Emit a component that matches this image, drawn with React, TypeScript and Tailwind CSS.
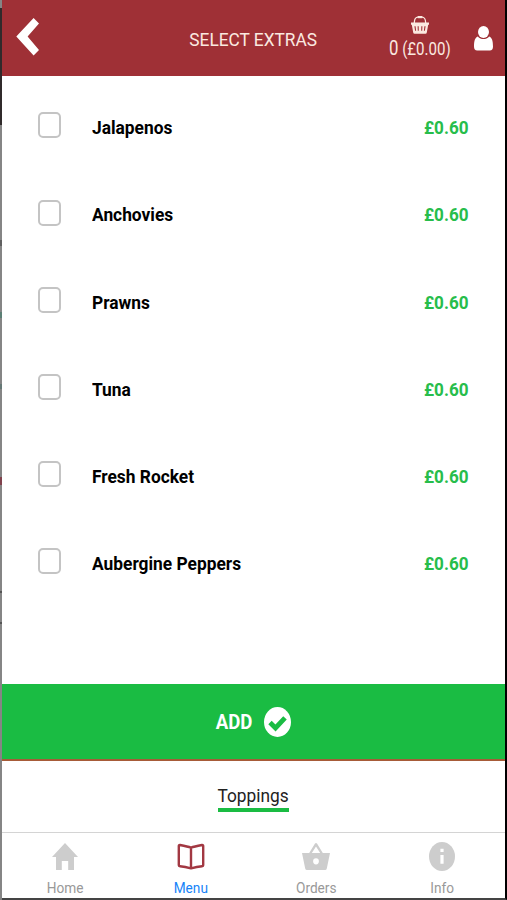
import React from "react";

const extras = ["Jalapenos", "Anchovies", "Prawns", "Tuna", "Fresh Rocket", "Aubergine Peppers"];

function HomeIcon() {
  return (
    <svg width="26" height="27" viewBox="0 0 26 27" fill="#cdcdcd">
      <path d="M13 0 L26 14 H22 V27 H16.2 V18 H9.8 V27 H4 V14 H0 Z" />
    </svg>
  );
}

function MenuIcon() {
  return (
    <svg width="28" height="27" viewBox="0 0 28 27" fill="none" stroke="#a23842" strokeWidth="2.4" strokeLinejoin="round">
      <path d="M14 4.6 C11 3.6 6 2.6 3 2 Q1.8 1.8 1.8 3 V22.2 Q1.8 23.2 3 23.3 C7 23.7 11 24.6 14 25.4 C17 24.6 21 23.7 25 23.3 Q26.2 23.2 26.2 22.2 V3 Q26.2 1.8 25 2 C22 2.6 17 3.6 14 4.6 V25.4" />
    </svg>
  );
}

function OrdersIcon() {
  return (
    <svg width="28" height="27" viewBox="0 0 28 27" fill="#cdcdcd">
      <path fillRule="evenodd" d="M0 10 H7.2 L13 .6 Q14 -.4 15 .6 L20.8 10 H28 L24.8 25.5 Q24.5 27 23 27 H5 Q3.5 27 3.2 25.5 Z M9.8 10 H18.2 L14 3.6 Z M14 15.2 A2.9 3.1 0 1 0 14 21.4 A2.9 3.1 0 1 0 14 15.2 Z" />
    </svg>
  );
}

function InfoIcon() {
  return (
    <svg width="26" height="29" viewBox="0 0 26 29">
      <ellipse cx="13" cy="14.5" rx="13" ry="14.5" fill="#cdcdcd" />
      <path fill="white" d="M11.4 6.8h3.2v3.2h-3.2zM11.4 13h3.2v8.8h-3.2z" />
    </svg>
  );
}

const tabs = [
  { name: "Home", icon: <HomeIcon />, color: "text-[#999]" },
  { name: "Menu", icon: <MenuIcon />, color: "text-[#1683f8]" },
  { name: "Orders", icon: <OrdersIcon />, color: "text-[#999]" },
  { name: "Info", icon: <InfoIcon />, color: "text-[#999]" },
];

export default function App() {
  return (
    <div className="flex h-[900px] w-[507px] overflow-hidden bg-white font-[Roboto,sans-serif]">
      <div className="flex w-[2px] shrink-0 flex-col bg-[#858585]">
        <div className="mt-[8px] h-[117px] bg-[#302a2b]" />
        <div className="mt-[115px] h-[6px] bg-[#606060]" />
        <div className="mt-[66px] h-[6px] bg-[#5b7f75]" />
        <div className="mt-[66px] h-[5px] bg-[#667876]" />
        <div className="mt-[88px] h-[8px] bg-[#80424c]" />
        <div className="mt-[106px] h-[2px] bg-[#555]" />
        <div className="mt-[29px] h-[2px] bg-[#555]" />
      </div>
      <div className="flex flex-1 flex-col border-r-2 border-b-2 border-r-black border-b-[#444]">
        <header className="flex h-[76px] shrink-0 bg-[#9f3036]">
          <div className="w-[120px] pt-[18px] pl-[14px]">
            <svg width="24" height="38" viewBox="0 0 24 38" fill="white">
              <path d="M17.6 0 L23 5.4 L11.6 18.5 L23 32 L17.6 37.6 L.3 18.5 Z" />
            </svg>
          </div>
          <h1 className="flex flex-1 justify-center pt-[26px] text-[19px] leading-[28px] whitespace-nowrap text-[#fbe9e0]">
            <span className="origin-center scale-x-[.91]">SELECT EXTRAS</span>
          </h1>
          <div className="flex w-[120px]">
            <div className="flex w-[69px] flex-col items-center pt-[16px] text-[#fbe9e0]">
              <svg width="18" height="18" viewBox="0 0 18 18" fill="none">
                <path d="M3.3 7 C3.3 3 5 1.1 7 1.1 H11 C13 1.1 14.7 3 14.7 7" stroke="currentColor" strokeWidth="1.3" />
                <path d="M6.7 0h4.6v2.2H6.7z" fill="currentColor" />
                <path fill="currentColor" fillRule="evenodd" d="M0 6.4h18v2.4h-.8L15.8 16.5Q15.6 17.7 14.5 17.7H3.5Q2.4 17.7 2.2 16.5L.8 8.8H0zM3.4 10.2l.7 4.6h1l-.5-4.6zM6.6 10.2l.2 4.6h1l-.1-4.6zM10.3 10.2l-.1 4.6h1l.2-4.6zM13.4 10.2l-.5 4.6h1l.7-4.6z" />
              </svg>
              <span className="mt-[3px] scale-x-[.86] text-[17.5px] leading-6 whitespace-nowrap"><span className="text-[19.5px]">0</span> (£0.00)</span>
            </div>
            <svg className="mt-[26px] ml-[20px]" width="19" height="25" viewBox="0 0 19 25" fill="white">
              <ellipse cx="9.5" cy="6" rx="5.5" ry="6" />
              <path d="M3.8 10.4 C7 14 12 14 15.2 10.4 C18 11.4 19 15 19 20.5 Q19 24.6 15.8 24.6 H3.2 Q0 24.6 0 20.5 C0 15 1 11.4 3.8 10.4 Z" />
            </svg>
          </div>
        </header>

        <main className="h-[608px] shrink-0 pt-[7.8px]">
          {extras.map((name) => (
            <div key={name} className="flex h-[87.2px] items-center pr-[36px] pl-[36px] text-[19px] font-bold">
              <span className="mb-[4px] h-[26px] w-[23px] rounded-[5px] border-2 border-[#c4c4c4]" />
              <span className="mt-[2px] ml-[31px] flex-1 origin-left scale-x-[.913] text-black">{name}</span>
              <span className="mt-[2px] origin-right scale-x-[.9] text-[#27bd4b]">£0.60</span>
            </div>
          ))}
        </main>

        <button className="flex h-[77px] shrink-0 items-center justify-center gap-[12px] border-b-2 border-[#a75b38] bg-[#1abc43] pr-[3px] text-white">
          <span className="mt-px origin-right scale-x-[.93] text-[20px] font-bold">ADD</span>
          <svg width="27" height="30" viewBox="0 0 27 30">
            <ellipse cx="13.5" cy="15" rx="13.5" ry="15" fill="white" />
            <path d="M6 15.5 L11.5 21 L21 10.8" fill="none" stroke="#1abc43" strokeWidth="4.8" />
          </svg>
        </button>

        <section className="flex h-[71px] shrink-0 justify-center pt-[21px]">
          <div className="flex h-[30px] w-[71px] justify-center border-b-4 border-[#1abc43] text-[19px] leading-[27px] text-[#222]">
            <span className="scale-x-[.91]">Toppings</span>
          </div>
        </section>

        <nav className="grid flex-1 grid-cols-4 border-t border-[#d4d4d4]">
          {tabs.map(({ name, icon, color }) => (
            <div key={name} className={`flex flex-col items-center pt-[9px] ${color}`}>
              <div className="flex h-[29px] items-center">{icon}</div>
              <span className="mt-[7px] scale-x-[.91] text-[15px] leading-5">{name}</span>
            </div>
          ))}
        </nav>
      </div>
    </div>
  );
}
